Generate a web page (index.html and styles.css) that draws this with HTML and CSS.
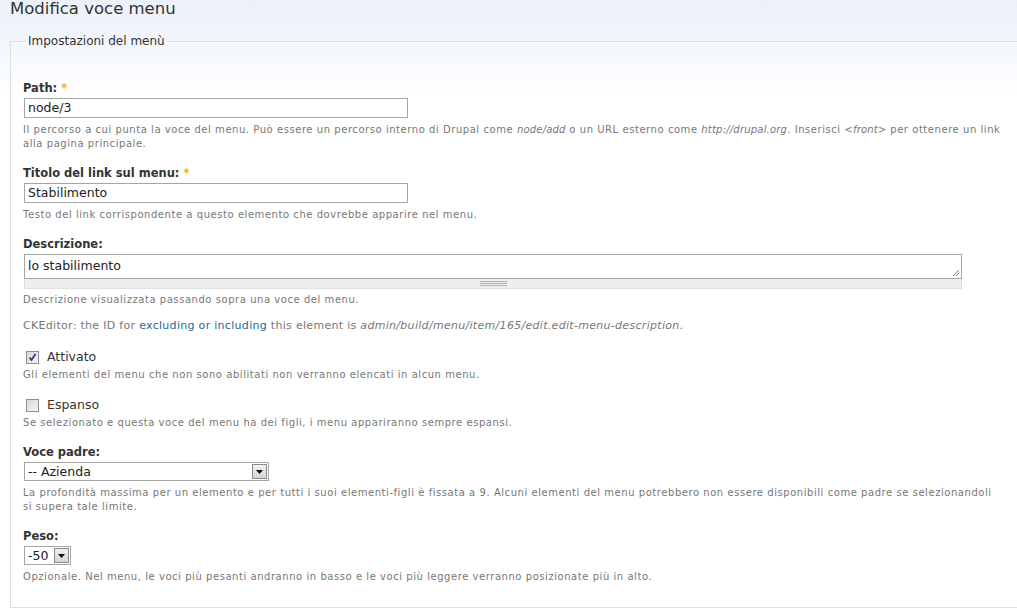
FILE: index.html
```html
<!DOCTYPE html>
<html lang="it">
<head>
<meta charset="utf-8">
<title>Modifica voce menu</title>
<link rel="stylesheet" href="styles.css">
</head>
<body>
<h1 class="page-title">Modifica voce menu</h1>
<form class="menu-form">
  <fieldset class="settings">
    <legend class="legend">Impostazioni del menù</legend>

    <div class="item">
      <label class="label">Path: <span class="req">*</span></label>
      <div class="text-input wide">node/3</div>
      <div class="desc">Il percorso a cui punta la voce del menu. Può essere un percorso interno di Drupal come <em>node/add</em> o un URL esterno come <em>http://drupal.org</em>. Inserisci <em>&lt;front&gt;</em> per ottenere un link alla pagina principale.</div>
    </div>

    <div class="item">
      <label class="label">Titolo del link sul menu: <span class="req">*</span></label>
      <div class="text-input wide">Stabilimento</div>
      <div class="desc">Testo del link corrispondente a questo elemento che dovrebbe apparire nel menu.</div>
    </div>

    <div class="item">
      <label class="label">Descrizione:</label>
      <div class="textarea-wrap">
        <div class="textarea">lo stabilimento
          <svg class="resize" width="9" height="9" viewBox="0 0 9 9"><path d="M8 2 L2 8 M8 5 L5 8" stroke="#777" stroke-width="1"/></svg>
        </div>
        <div class="grippie"><span class="grip"></span></div>
      </div>
      <div class="desc tight">Descrizione visualizzata passando sopra una voce del menu.</div>
    </div>

    <div class="item ck">
      CKEditor: the ID for <a href="#" class="link">excluding or including</a> this element is <em>admin/build/menu/item/165/edit.edit-menu-description</em>.
    </div>

    <div class="item check-item">
      <label class="check-label"><span class="box checked"><svg width="9" height="9" viewBox="0 0 9 9"><path d="M1.5 4.5 L3.5 7 L7.5 1" fill="none" stroke="#2a3f8f" stroke-width="1.8"/></svg></span>Attivato</label>
      <div class="desc">Gli elementi del menu che non sono abilitati non verranno elencati in alcun menu.</div>
    </div>

    <div class="item check-item">
      <label class="check-label"><span class="box"></span>Espanso</label>
      <div class="desc">Se selezionato e questa voce del menu ha dei figli, i menu appariranno sempre espansi.</div>
    </div>

    <div class="item">
      <label class="label">Voce padre:</label>
      <div class="select parent"><span class="select-text">-- Azienda</span><span class="arrow"><svg width="7" height="4" viewBox="0 0 7 4"><path d="M0 0 H7 L3.5 4 Z" fill="#111"/></svg></span></div>
      <div class="desc narrow">La profondità massima per un elemento e per tutti i suoi elementi-figli è fissata a 9. Alcuni elementi del menu potrebbero non essere disponibili come padre se selezionandoli si supera tale limite.</div>
    </div>

    <div class="item last">
      <label class="label">Peso:</label>
      <div class="select weight"><span class="select-text">-50</span><span class="arrow"><svg width="7" height="4" viewBox="0 0 7 4"><path d="M0 0 H7 L3.5 4 Z" fill="#111"/></svg></span></div>
      <div class="desc">Opzionale. Nel menu, le voci più pesanti andranno in basso e le voci più leggere verranno posizionate più in alto.</div>
    </div>
  </fieldset>
</form>
</body>
</html>
```

FILE: styles.css
```css
html, body {
  margin: 0;
  padding: 0;
  overflow: hidden;
}
body {
  background: linear-gradient(to bottom, #ecf1f9 0px, #f2f6fb 40px, #ffffff 95px, #ffffff 100%);
  font-family: "DejaVu Sans", Verdana, sans-serif;
  color: #333;
  padding-left: 10px;
  height: 613px;
}
.page-title {
  margin: 0;
  font-family: "DejaVu Sans", Tahoma, sans-serif;
  font-weight: normal;
  font-size: 16.5px;
  line-height: 18px;
  color: #333;
  height: 34px;
}
.menu-form {
  margin: 0;
}
.settings {
  margin: 0;
  border: 1px solid #d5e0ea;
  border-right: 0;
  padding: 33px 0 23px 12px;
  min-width: 0;
}
.legend {
  padding: 0 3px;
  margin-left: 2px;
  font-size: 12px;
  color: #333;
}
.item {
  margin-bottom: 15px;
}
.item.last {
  margin-bottom: 0;
}
.label {
  display: block;
  font-weight: bold;
  font-size: 11.5px;
  line-height: 14px;
  color: #333;
  margin-bottom: 3px;
}
.req {
  color: #f0b400;
}
.text-input {
  box-sizing: border-box;
  margin-left: 1px;
  height: 20px;
  border: 1px solid #a5a5a5;
  background: #fff;
  font-size: 12.5px;
  line-height: 18px;
  padding-left: 3px;
  color: #222;
}
.text-input.wide {
  width: 384px;
}
.desc {
  font-size: 10px;
  letter-spacing: 0.55px;
  line-height: 14px;
  color: #777;
  margin-top: 5px;
  padding-right: 8px;
}
.desc.narrow {
  padding-right: 20px;
}
.desc em {
  letter-spacing: 0.2px;
}
.desc.tight {
  margin-top: 4px;
}
.desc em, .ck em {
  font-style: italic;
}
.textarea-wrap {
  margin-left: 1px;
  width: 938px;
}
.textarea {
  position: relative;
  box-sizing: border-box;
  height: 25px;
  border: 1px solid #a5a5a5;
  background: #fff;
  font-size: 12.5px;
  line-height: 22px;
  padding-left: 3px;
  color: #222;
}
.resize {
  position: absolute;
  right: 1px;
  bottom: 1px;
}
.grippie {
  box-sizing: border-box;
  height: 10px;
  background: #eeeeee;
  border: 1px solid #e0e0e0;
  border-top: 0;
  display: flex;
  justify-content: center;
  align-items: center;
}
.grip {
  display: block;
  width: 27px;
  height: 5px;
  border-top: 1px solid #b5b5b5;
  border-bottom: 1px solid #b5b5b5;
  box-sizing: border-box;
  position: relative;
}
.grip::after {
  content: "";
  position: absolute;
  left: 0;
  right: 0;
  top: 1px;
  border-top: 1px solid #b5b5b5;
}
.ck {
  font-size: 11px;
  letter-spacing: 0.3px;
  line-height: 14px;
  color: #777;
  margin-top: -3px;
  margin-bottom: 16px;
}
.link {
  color: #1f6796;
  text-decoration: none;
}
.check-item {
  margin-bottom: 15px;
}
.check-label {
  display: flex;
  align-items: center;
  font-size: 12.5px;
  line-height: 16px;
  color: #333;
  padding-left: 3px;
}
.box {
  box-sizing: border-box;
  width: 13px;
  height: 13px;
  border: 1px solid #8f8f8f;
  background: linear-gradient(135deg, #d8d8d8, #f6f6f6);
  margin-right: 8px;
  display: flex;
  align-items: center;
  justify-content: center;
}
.check-item .desc {
  margin-top: 3px;
}
.select {
  box-sizing: border-box;
  margin-left: 1px;
  height: 19px;
  border: 1px solid #a5a5a5;
  background: #fff;
  display: flex;
  align-items: stretch;
  font-size: 12.5px;
  color: #222;
}
.select.parent {
  width: 245px;
}
.select.weight {
  width: 47px;
}
.select-text {
  flex: 1;
  padding-left: 3px;
  line-height: 17px;
}
.arrow {
  box-sizing: border-box;
  width: 15px;
  margin: 1px;
  border: 1px solid #8a8a8a;
  background: linear-gradient(to bottom, #f0f0f0, #d5d5d5);
  display: flex;
  align-items: center;
  justify-content: center;
}
```
